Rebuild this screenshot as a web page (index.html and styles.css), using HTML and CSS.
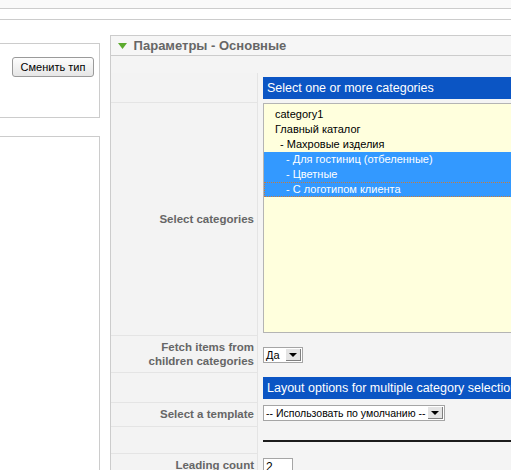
FILE: index.html
```html
<!DOCTYPE html>
<html>
<head>
    <meta charset="utf-8">
    <title>Параметры - Основные</title>
    <link rel="stylesheet" href="styles.css">
</head>
<body>
    <div class="topbar"></div>
    <div class="subbar"></div>

    <div class="layout">
        <div class="side">
            <div class="box type-box">
                <button class="btn">Сменить тип</button>
            </div>
            <div class="box side-box"></div>
        </div>

        <div class="pane">
            <h3 class="pane-title">
                <svg class="toggler" width="9" height="6" viewBox="0 0 9 6">
                    <polygon points="0,0 9,0 4.5,6" fill="#5cab2e"/>
                </svg>
                Параметры - Основные
            </h3>
            <div class="pane-body">
                <table class="paramlist">
                    <tr class="row-head">
                        <td class="key"></td>
                        <td class="value"><div class="param-header">Select one or more categories</div></td>
                    </tr>
                    <tr class="row-cats">
                        <td class="key">Select categories</td>
                        <td class="value">
                            <div class="listbox">
                                <div class="opt">category1</div>
                                <div class="opt">Главный каталог</div>
                                <div class="opt lvl1">- Махровые изделия</div>
                                <div class="opt lvl2 selected">- Для гостиниц (отбеленные)</div>
                                <div class="opt lvl2 selected">- Цветные</div>
                                <div class="opt lvl2 selected focused">- С логотипом клиента</div>
                            </div>
                        </td>
                    </tr>
                    <tr class="row-fetch">
                        <td class="key">Fetch items from<br>children categories</td>
                        <td class="value">
                            <span class="select select-short"><span class="select-text">Да</span><span class="select-arrow"></span></span>
                        </td>
                    </tr>
                    <tr class="row-head row-head2">
                        <td class="key"></td>
                        <td class="value"><div class="param-header">Layout options for multiple category selection</div></td>
                    </tr>
                    <tr class="row-template">
                        <td class="key">Select a template</td>
                        <td class="value">
                            <span class="select select-long"><span class="select-text">-- Использовать по умолчанию --</span><span class="select-arrow"></span></span>
                        </td>
                    </tr>
                    <tr class="row-spacer">
                        <td class="key"></td>
                        <td class="value"><hr class="divider"></td>
                    </tr>
                    <tr class="row-count">
                        <td class="key">Leading count</td>
                        <td class="value"><span class="text-input">2</span></td>
                    </tr>
                </table>
            </div>
        </div>
    </div>
</body>
</html>
```

FILE: styles.css
```css
html, body {
    margin: 0;
    padding: 0;
    overflow: hidden;
    background: #fff;
    font-family: "Liberation Sans", Arial, sans-serif;
}

.topbar {
    height: 8px;
    background: #f9f9f9;
    border-bottom: 1px solid #ccc;
}

.subbar {
    height: 10px;
    border-bottom: 1px solid #ccc;
}

.layout {
    display: flex;
    align-items: flex-start;
}

.side {
    width: 100px;
    flex-shrink: 0;
    margin-top: 23px;
}

.box {
    border: 1px solid #ccc;
    border-left: none;
    background: #fff;
}

.type-box {
    height: 75px;
    padding: 13px 5px 0 0;
    box-sizing: border-box;
    text-align: right;
}

.btn {
    width: 82px;
    height: 20px;
    padding: 0;
    font-family: "Liberation Sans", Arial, sans-serif;
    font-size: 11px;
    color: #000;
    border: 1px solid #9a9a9a;
    border-radius: 3px;
    background: linear-gradient(#fdfdfd, #e6e6e6);
}

.side-box {
    margin-top: 18px;
    height: 400px;
}

.pane {
    width: 620px;
    flex-shrink: 0;
    margin: 15px 0 0 10px;
    border: 1px solid #ccc;
    background: #f4f4f4;
}

.pane-title {
    margin: 0;
    height: 19px;
    line-height: 19px;
    padding-left: 7px;
    font-size: 13px;
    font-weight: bold;
    color: #666;
    background: #f6f6f6;
    border-bottom: 1px solid #ccc;
}

.toggler {
    margin-right: 3px;
    vertical-align: 1px;
}

.pane-body {
    padding-top: 17px;
    height: 500px;
}

.paramlist {
    border-collapse: collapse;
    width: 100%;
}

.paramlist td {
    padding: 0;
}

.key {
    width: 143px;
    padding-right: 3px !important;
    text-align: right;
    vertical-align: middle;
    font-size: 11.5px;
    font-weight: bold;
    color: #666;
    background: #f3f3f3;
    border-right: 1px solid #e4e4e4;
    border-bottom: 1px solid #e4e4e4;
}

.value {
    padding-left: 5px !important;
    vertical-align: top;
}

.row-head .value { padding-top: 4px !important; padding-bottom: 3px !important; }
.row-head2 .value { padding-top: 5px !important; }

.param-header {
    height: 22px;
    line-height: 22px;
    padding-left: 4px;
    font-size: 12.5px;
    color: #fff;
    background: #0b55c4;
    white-space: nowrap;
}

.row-cats .value { padding-top: 1px !important; padding-bottom: 2px !important; }

.listbox {
    width: 300px;
    height: 230px;
    box-sizing: border-box;
    border: 1px solid #b4b4b4;
    background: #ffffdd;
    padding-top: 3px;
    font-size: 11px;
    color: #000;
}

.opt {
    height: 15px;
    line-height: 15px;
    padding-left: 11px;
    white-space: nowrap;
}

.opt.lvl1 { padding-left: 16px; }
.opt.lvl2 { padding-left: 22px; }

.opt.selected {
    background: #3399ff;
    color: #fff;
}

.opt.focused {
    outline: 1px dotted #c87a3c;
    outline-offset: -1px;
}

.row-fetch .value { padding-top: 12px !important; padding-bottom: 9px !important; }
.row-fetch .key { line-height: 14px; }

.select {
    display: flex;
    height: 16px;
    box-sizing: border-box;
    border: 1px solid #a5a5a5;
    background: #fff;
    font-size: 11px;
    color: #000;
}

.select-short { width: 40px; }
.select-long { width: 182px; font-size: 10.5px; }

.select-text {
    flex: 1;
    line-height: 14px;
    padding-left: 2px;
    white-space: nowrap;
    overflow: hidden;
}

.select-arrow {
    position: relative;
    flex-shrink: 0;
    width: 15px;
    margin: 1px;
    background: #e4e4e4;
    border-right: 1px solid #808080;
    border-bottom: 1px solid #808080;
    box-sizing: border-box;
}

.select-arrow::after {
    content: "";
    position: absolute;
    left: 3px;
    top: 4px;
    border-left: 4px solid transparent;
    border-right: 4px solid transparent;
    border-top: 4px solid #000;
}

.row-template .value { padding-top: 3px !important; padding-bottom: 5px !important; }

.row-spacer .value { padding-top: 14px !important; padding-bottom: 11px !important; }

.divider {
    margin: 0;
    border: none;
    border-top: 2px solid #1c1c1c;
}

.row-count .value { padding-top: 4px !important; }

.text-input {
    display: inline-block;
    width: 30px;
    height: 18px;
    box-sizing: border-box;
    border: 1px solid #a5a5a5;
    background: #fff;
    font-size: 12px;
    line-height: 16px;
    padding-left: 2px;
}
```
